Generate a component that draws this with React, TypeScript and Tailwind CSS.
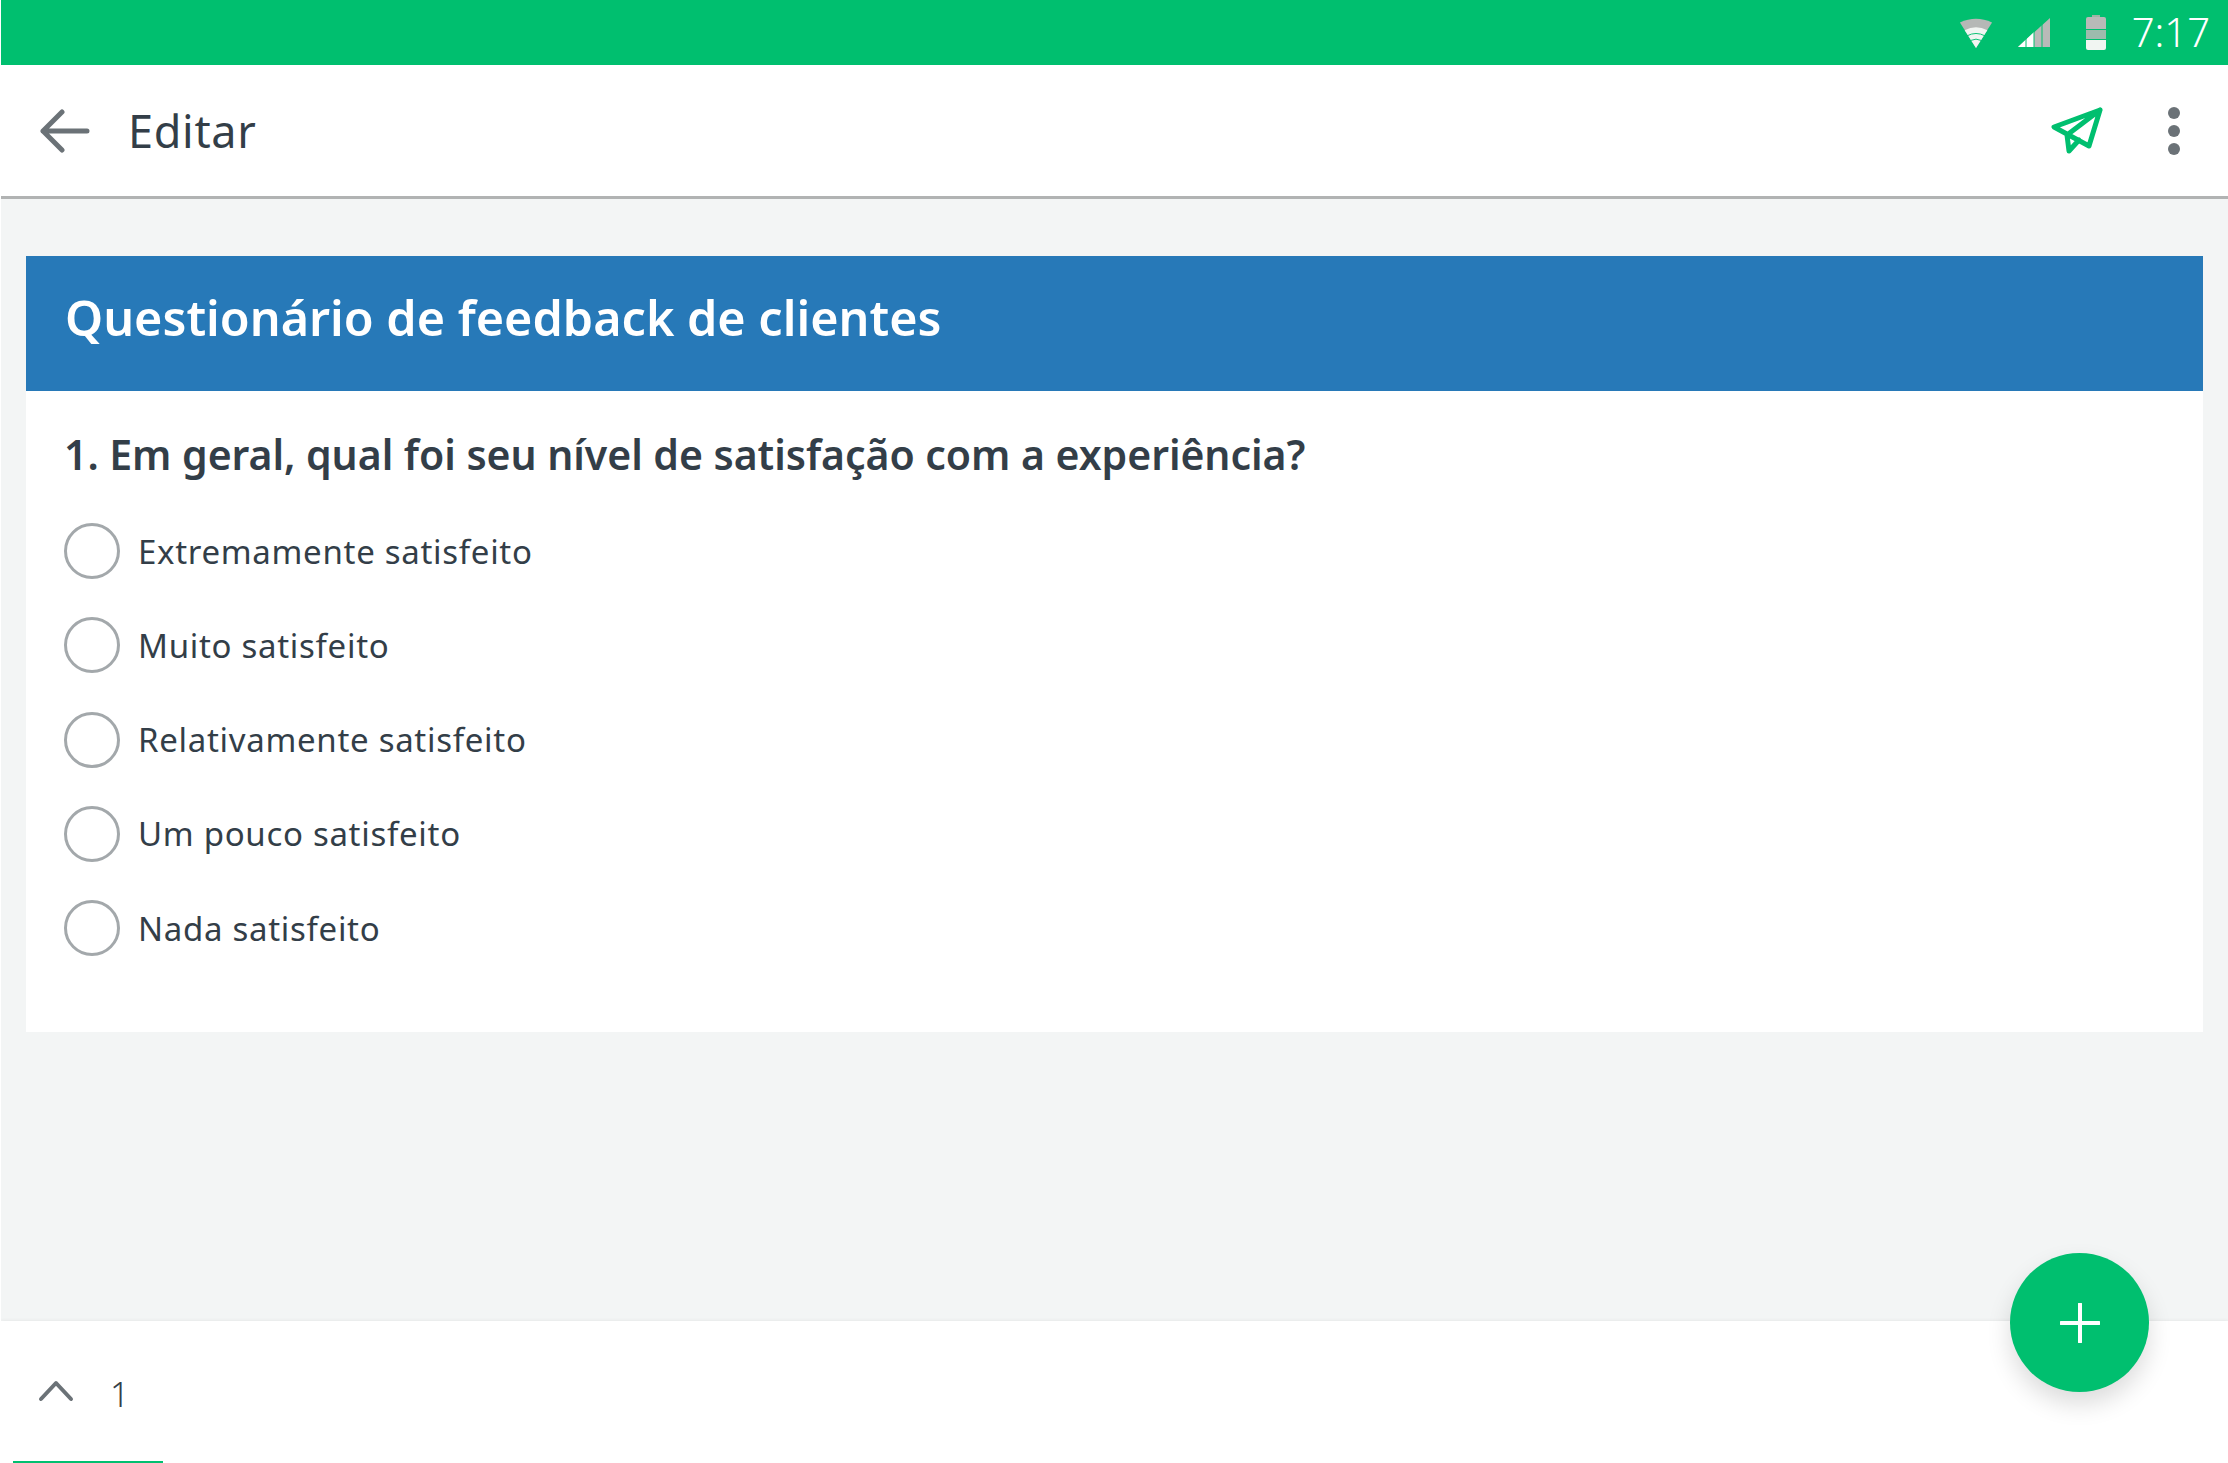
const options = [
  "Extremamente satisfeito",
  "Muito satisfeito",
  "Relativamente satisfeito",
  "Um pouco satisfeito",
  "Nada satisfeito",
];

function StatusIcons() {
  return (
    <div className="flex items-center">
      <svg width="34" height="36" viewBox="0 0 36 36" className="mr-[24px]">
        <path d="M1 6 Q18 -2 35 6 L18 33 Z" fill="#b5b8b6" transform="translate(0 1)" />
        <path d="M6 15 Q18 9 30 15 L18 34 Z" fill="#f1f5f2" />
        <path d="M8.5 21 Q18 16 27.500 21" fill="none" stroke="#00bf6f" strokeWidth="1" />
        <path d="M12 26 Q18 23 24 26" fill="none" stroke="#00bf6f" strokeWidth="1" />
      </svg>
      <svg width="34" height="32" viewBox="0 0 34 32" className="mr-[35px]">
        <path d="M1 30 L33 1 V30 Z" fill="#b8bab8" />
        <path d="M1 30 L17 15 V30 Z" fill="#ffffff" />
        <path d="M9 6 V31 M17 6 V31 M25 0 V31" stroke="#00bf6f" strokeWidth="1" />
      </svg>
      <svg width="20" height="36" viewBox="0 0 20 36" className="mr-[26px]">
        <path d="M6 0 H14 V3 H6 Z" fill="#9fb3a5" />
        <path d="M0 4 Q0 2 2 2 H18 Q20 2 20 4 V14 H0 Z" fill="#b8bab8" />
        <path d="M0 15 H20 V24 H0 Z" fill="#b8bab8" opacity="0.85" />
        <path d="M0 25 H20 V33 Q20 35 18 35 H2 Q0 35 0 33 Z" fill="#f1f5f2" />
      </svg>
      <span className="pb-[2px] text-[40px] leading-none font-light text-white">7:17</span>
    </div>
  );
}

export default function App() {
  return (
    <div className="relative flex h-[1463px] w-[2228px] flex-col overflow-hidden border-l border-white bg-white font-['Noto_Sans',sans-serif] text-[#333e48]">
      <header className="flex h-[65px] shrink-0 items-center justify-end bg-[#00bf6f] pr-[18px]">
        <StatusIcons />
      </header>

      <nav className="flex h-[134px] shrink-0 items-center border-b-[3px] border-[#b1b3b3] bg-white pl-[39px] pr-[48px]">
        <svg width="50" height="44" viewBox="0 0 50 44" fill="none" stroke="#6b7277" strokeWidth="5" strokeLinecap="round" strokeLinejoin="round">
          <path d="M47 22 H3 M22 3 L3 22 L22 41" />
        </svg>
        <h1 className="ml-[38px] text-[45px] font-normal leading-none tracking-[0.7px]">Editar</h1>
        <svg width="52" height="48" viewBox="0 0 52 48" fill="none" stroke="#00bf6f" strokeWidth="5" strokeLinecap="round" strokeLinejoin="round" className="ml-auto">
          <path d="M49 3 L3 20 L38 39 Z M49 3 L16 28 L18 44 L28 33" />
        </svg>
        <div className="ml-[65px] flex flex-col gap-[6px]">
          <span className="h-[12px] w-[12px] rounded-full bg-[#6b7277]" />
          <span className="h-[12px] w-[12px] rounded-full bg-[#6b7277]" />
          <span className="h-[12px] w-[12px] rounded-full bg-[#6b7277]" />
        </div>
      </nav>

      <main className="flex-1 bg-[#f3f5f5] pl-[25px] pr-[25px] pt-[57px]">
        <section className="bg-white">
          <div className="flex h-[135px] items-center bg-[#2779b8] pb-[12px] pl-[39px]">
            <h2 className="text-[48.500px] font-semibold leading-none text-white">Questionário de feedback de clientes</h2>
          </div>
          <div className="h-[641px] pl-[38px] pt-[37px]">
            <h3 className="text-[41px] font-semibold leading-[52px] tracking-[-0.05px]">1. Em geral, qual foi seu nível de satisfação com a experiência?</h3>
            <ul className="mt-[43px] flex flex-col gap-[38.300px]">
              {options.map((label) => (
                <li key={label} className="flex h-[56px] items-center">
                  <span className="h-[56px] w-[56px] shrink-0 rounded-full border-[3px] border-[#a3a8ab] bg-white" />
                  <span className="ml-[18px] text-[33px] leading-none tracking-[0.7px]">{label}</span>
                </li>
              ))}
            </ul>
          </div>
        </section>
      </main>

      <footer className="relative flex h-[142px] shrink-0 items-start bg-white pl-[36px] pt-[58px] shadow-[0_-1px_3px_rgba(0,0,0,0.05)]">
        <svg width="38" height="24" viewBox="0 0 38 24" fill="none" stroke="#6b7277" strokeWidth="4" strokeLinecap="round" strokeLinejoin="round">
          <path d="M4 20 L19 4 L34 20" />
        </svg>
        <span className="ml-[35px] text-[34px] font-light leading-[30px]">1</span>
        <span className="absolute bottom-0 left-[12px] h-[2px] w-[150px] bg-[#00bf6f]" />
      </footer>

      <button className="absolute left-[2009px] top-[1253px] flex h-[139px] w-[139px] items-center justify-center rounded-full bg-[#00bf6f] shadow-[0_12px_24px_rgba(0,0,0,0.14)]">
        <svg width="40" height="40" viewBox="0 0 40 40" fill="none" stroke="#ffffff" strokeWidth="4" strokeLinecap="round">
          <path d="M20 1 V39 M1 20 H39" />
        </svg>
      </button>
    </div>
  );
}
